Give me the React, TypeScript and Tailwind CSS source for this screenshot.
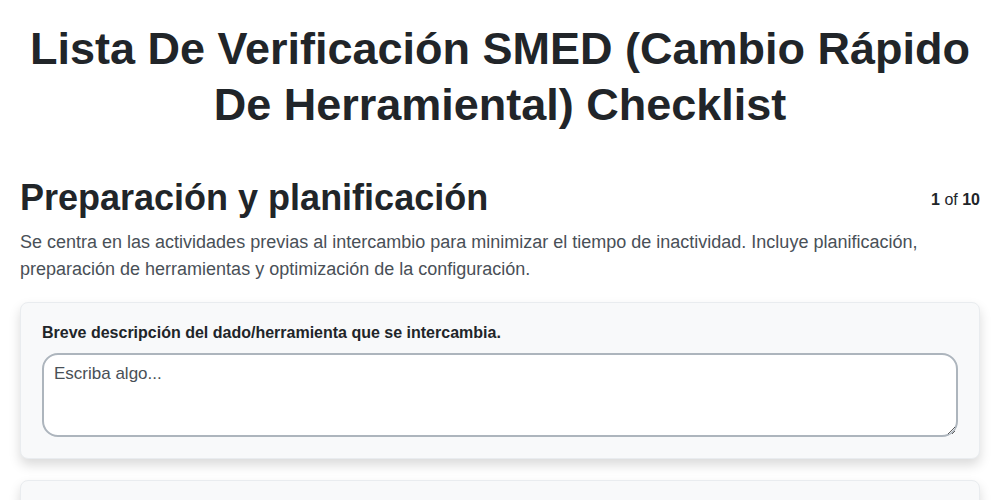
import React from "react";

export default function App() {
  return (
    <div className="min-h-screen bg-white text-[#212529]" style={{ fontFamily: '"Liberation Sans", Arial, sans-serif' }}>
      <div className="px-5">
        <h1 className="pt-[21px] text-center text-[45px] font-bold leading-[56px] text-[#212529]">
          Lista De Verificación SMED (Cambio Rápido De Herramiental) Checklist
        </h1>
        <div className="mt-[43px] flex items-start justify-between">
          <h2 className="text-[36px] font-bold leading-[44px] text-[#212529]">Preparación y planificación</h2>
          <div className="mt-[12px] text-base text-[#212529]">
            <span className="font-bold">1</span> of <span className="font-bold">10</span>
          </div>
        </div>
        <p className="mt-[9px] text-[18px] leading-[27px] text-[#495057]">
          Se centra en las actividades previas al intercambio para minimizar el tiempo de inactividad. Incluye planificación, preparación de herramientas y optimización de la configuración.
        </p>
        <div className="mt-[19px] flex flex-col gap-[21px]">
          <div className="rounded-lg border border-[#e9ecef] bg-[#f8f9fa] px-[21px] pt-[21px] pb-[21px] shadow-[0_6px_12px_rgba(0,0,0,0.15)]">
            <label className="block text-base font-bold leading-[18px] text-[#212529]">
              Breve descripción del dado/herramienta que se intercambia.
            </label>
            <textarea
              className="mt-[11px] block h-[84px] w-full resize-y rounded-2xl border-2 border-[#adb5bd] bg-white px-[10px] py-[7px] text-[17px] leading-6 text-[#212529] placeholder:text-[#495057] outline-none"
              placeholder="Escriba algo..."
            />
          </div>
          <div className="h-[120px] rounded-lg border border-[#e9ecef] bg-[#f8f9fa] shadow-[0_6px_12px_rgba(0,0,0,0.15)]" />
        </div>
      </div>
    </div>
  );
}
